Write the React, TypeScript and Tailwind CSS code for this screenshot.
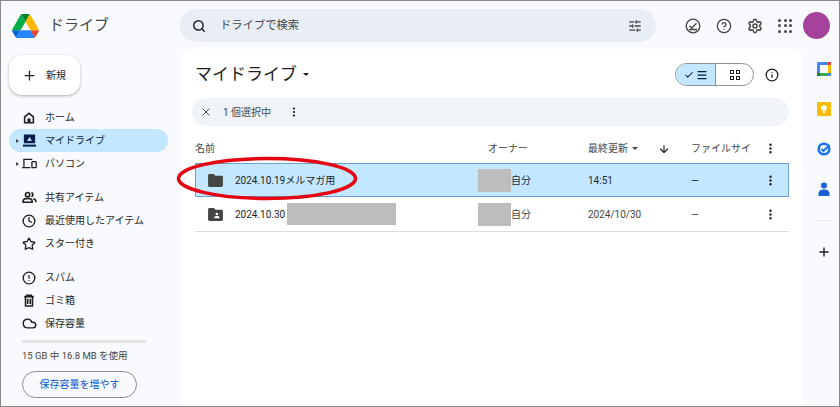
import { Search, SlidersHorizontal, CircleHelp, Settings, Plus, Info, X, EllipsisVertical, ArrowDown, Check, Menu, Star, Clock, Cloud, CircleAlert } from "lucide-react";
import type { ReactNode } from "react";

const FONT = "font-['Roboto','Noto_Sans_CJK_JP',sans-serif]";

function Caret({ className }: { className: string }) {
  return (
    <svg viewBox="0 0 10 5" className={className} fill="currentColor">
      <path d="M0 0h10L5 5z" />
    </svg>
  );
}

function DriveLogo() {
  return (
    <svg viewBox="0 0 87.3 78" className="h-[24px] w-[27px]">
      <path d="m6.6 66.85 3.85 6.65c.8 1.4 1.95 2.5 3.3 3.3l13.75-23.8h-27.5c0 1.55.4 3.1 1.2 4.5z" fill="#0066da" />
      <path d="m43.65 25-13.75-23.8c-1.35.8-2.5 1.9-3.3 3.3l-25.4 44a9.06 9.06 0 0 0-1.2 4.5h27.5z" fill="#00ac47" />
      <path d="m73.55 76.8c1.35-.8 2.5-1.9 3.3-3.3l1.6-2.75 7.65-13.25c.8-1.4 1.2-2.95 1.2-4.5h-27.502l5.852 11.5z" fill="#ea4335" />
      <path d="m43.65 25 13.75-23.8c-1.35-.8-2.9-1.2-4.5-1.2h-18.5c-1.6 0-3.15.45-4.5 1.2z" fill="#00832d" />
      <path d="m59.8 53h-32.3l-13.75 23.8c1.35.8 2.9 1.2 4.5 1.2h50.8c1.6 0 3.15-.45 4.5-1.2z" fill="#2684fc" />
      <path d="m73.4 26.5-12.7-22c-.8-1.4-1.95-2.5-3.3-3.3l-13.75 23.8 16.15 28h27.45c0-1.55-.4-3.1-1.2-4.5z" fill="#ffba00" />
    </svg>
  );
}

function HomeIcon() {
  return (
    <svg viewBox="0 0 16 16" className="h-[14px] w-[14px] text-[#1f1f1f]" fill="none" stroke="currentColor" strokeWidth="1.8">
      <path d="M3 6.8 8 2.6l5 4.2v6.6H3z" />
      <rect x="6.2" y="8.6" width="3.6" height="4.8" fill="currentColor" stroke="none" />
    </svg>
  );
}

function MyDriveIcon() {
  return (
    <svg viewBox="0 0 16 16" className="h-[15px] w-[15px] text-[#041e49]" fill="currentColor">
      <path d="M2 1.500h12v9.500H2zm6 2.700L5.400 8.600h5.200z" fillRule="evenodd" />
      <path d="M1 12.400h14v2.100H1z" />
    </svg>
  );
}

function ComputerIcon() {
  return (
    <svg viewBox="0 0 16 14" className="h-[13px] w-[15px] text-[#1f1f1f]" fill="none" stroke="currentColor" strokeWidth="1.4">
      <path d="M2 10.500V2.500h9M0 11.500h9" />
      <rect x="10.600" y="5" width="4.600" height="6.500" rx=".6" />
    </svg>
  );
}

function SharedIcon() {
  return (
    <svg viewBox="0 0 16 16" className="h-[15px] w-[15px] text-[#1f1f1f]" fill="none" stroke="currentColor" strokeWidth="1.7">
      <circle cx="6" cy="5" r="2.300" />
      <path d="M1.200 13v-1.200c0-1.700 2.400-2.800 4.800-2.800s4.800 1.100 4.800 2.800V13z" />
      <path d="M10 2.800a2.300 2.300 0 0 1 0 4.400M12 9.300c1.600.4 2.800 1.300 2.800 2.500V13" />
    </svg>
  );
}

function TrashIcon() {
  return (
    <svg viewBox="0 0 16 16" className="h-[14px] w-[14px] text-[#1f1f1f]" fill="none" stroke="currentColor" strokeWidth="1.800">
      <path d="M2.500 3h11M4 3v10.800h8V3" />
      <path d="M6.500 5.500v6M9.500 5.500v6" />
      <path d="M5.500 3V1.500h5V3" />
    </svg>
  );
}

function FolderIcon({ shared }: { shared?: boolean }) {
  return (
    <svg viewBox="0 0 16 14" className="h-[13px] w-[15px] text-[#444746]" fill="currentColor">
      <path d="M1.500 0h4.700l1.600 1.800h6.700c.8 0 1.500.7 1.500 1.500v9.200c0 .8-.7 1.500-1.500 1.500h-13C.7 14 0 13.300 0 12.500v-11C0 .7.700 0 1.500 0z" />
      {shared && <path d="M9.500 5a1.400 1.400 0 1 1 0 2.800 1.400 1.400 0 0 1 0-2.800zM6.700 11v-.8c0-1 1.800-1.500 2.800-1.500s2.800.5 2.800 1.500v.8z" fill="#fff" />}
    </svg>
  );
}

function NavItem({ icon, label, active, arrow }: { icon: ReactNode; label: string; active?: boolean; arrow?: boolean }) {
  return (
    <div className={`relative flex h-[23px] items-center rounded-full pl-[12px] ${active ? "bg-[#c2e7ff] text-[#041e49]" : "text-[#1f1f1f]"}`}>
      {arrow && <span className="absolute left-[7px] h-0 w-0 border-y-[2px] border-l-[3px] border-y-transparent border-l-[#444746]" />}
      <span className="flex w-[24px] shrink-0 justify-center pr-[8px]">{icon}</span>
      <span className="text-[10px]">{label}</span>
    </div>
  );
}

function Redacted({ className }: { className: string }) {
  return <div className={`bg-[#bdbdbd] ${className}`} />;
}

const COLS = "grid grid-cols-[293px_100px_103px_73px_25px]";

function FileRow({ name, redactName, date, shared, selected }: { name: string; redactName?: boolean; date: string; shared?: boolean; selected?: boolean }) {
  return (
    <div className={`${COLS} items-center text-[10px] ${selected ? "h-[34px] outline outline-[#6d9ed6] -outline-offset-1 bg-[#c2e7ff] text-[#1f2a44]" : "h-[35px] border-b border-[#dadce0] text-[#444746]"}`}>
      <div className="flex items-center pl-[13px]">
        <FolderIcon shared={shared} />
        <span className="ml-[12px] whitespace-nowrap text-[#1f1f1f]">{name}</span>
        {redactName && <Redacted className="ml-[2px] h-[22px] w-[109px]" />}
      </div>
      <div className="-ml-[10px] flex items-center">
        <Redacted className="h-[23px] w-[33px]" />
        <span>自分</span>
      </div>
      <span>{date}</span>
      <span>—</span>
      <EllipsisVertical className="h-[13px] w-[13px] text-[#1f1f1f]" strokeWidth={2.500} />
    </div>
  );
}

export default function App() {
  return (
    <div className={`${FONT} relative h-[407px] w-[840px] overflow-hidden border border-[#8a8a8a] bg-[#f8fafd]`}>
      {/* top bar */}
      <header className="flex h-[48px] items-center pt-[1px]">
        <div className="flex w-[179px] items-center pl-[11px]">
          <DriveLogo />
          <span className="ml-[10px] text-[15px] leading-none text-[#444746]">ドライブ</span>
        </div>
        <div className="flex h-[33px] w-[476px] items-center rounded-full bg-[#e9eef6] pl-[12px] pr-[14px]">
          <Search className="h-[14px] w-[14px] text-[#1f1f1f]" strokeWidth={2.500} />
          <span className="ml-[14px] pt-[1px] text-[11.300px] text-[#444746]">ドライブで検索</span>
          <SlidersHorizontal className="ml-auto h-[14px] w-[14px] text-[#444746]" strokeWidth={2.200} />
        </div>
        <div className="ml-[29px] flex items-center gap-[15px] text-[#444746]">
          <svg viewBox="0 0 16 16" className="h-[16px] w-[16px]" fill="none" stroke="currentColor" strokeWidth="1.300">
            <circle cx="8" cy="8" r="6.800" />
            <path d="m4.500 7.800 2.200 2.200 4.800-4.800M4 11.500h8" />
          </svg>
          <CircleHelp className="h-[16px] w-[16px]" strokeWidth={1.900} />
          <Settings className="h-[16px] w-[16px]" strokeWidth={2.300} />
          <div className="grid grid-cols-3 gap-[2.500px]">
            {Array.from({ length: 9 }).map((_, i) => (
              <span key={i} className="h-[3px] w-[3px] rounded-full bg-[#444746]" />
            ))}
          </div>
        </div>
        <div className="ml-[11px] h-[27px] w-[27px] rounded-full bg-[#a5429c]" />
      </header>

      <div className="flex h-[357px]">
        {/* left nav */}
        <aside className="w-[180px] shrink-0 pl-[8px] pr-[13px] pt-[6px]">
          <button className="flex h-[40px] w-[71px] items-center rounded-[13px] bg-white pl-[13px] shadow-[0_1px_3px_rgba(60,64,67,.4)]">
            <Plus className="h-[15px] w-[15px] text-[#1f1f1f]" />
            <span className="ml-[9px] text-[10px] text-[#1f1f1f]">新規</span>
          </button>
          <nav className="mt-[11px]">
            <NavItem icon={<HomeIcon />} label="ホーム" />
            <NavItem icon={<MyDriveIcon />} label="マイドライブ" active arrow />
            <NavItem icon={<ComputerIcon />} label="パソコン" arrow />
            <div className="h-[11px]" />
            <NavItem icon={<SharedIcon />} label="共有アイテム" />
            <NavItem icon={<Clock className="h-[14px] w-[14px]" strokeWidth={2.300} />} label="最近使用したアイテム" />
            <NavItem icon={<Star className="h-[14px] w-[14px]" strokeWidth={2.300} />} label="スター付き" />
            <div className="h-[11px]" />
            <NavItem icon={<CircleAlert className="h-[14px] w-[14px]" strokeWidth={2.300} />} label="スパム" />
            <NavItem icon={<TrashIcon />} label="ゴミ箱" />
            <NavItem icon={<Cloud className="h-[15px] w-[15px]" strokeWidth={2.200} />} label="保存容量" />
          </nav>
          <div className="ml-[13px] mt-[5px] h-[3px] w-[124px] bg-[#e3e3e3]" />
          <p className="ml-[13px] mt-[6px] text-[9.500px] leading-[14px] text-[#444746]">15 GB 中 16.8 MB を使用</p>
          <button className="ml-[13px] mt-[8px] h-[27px] w-[115px] rounded-full border border-[#8a8d90] text-[10px] text-[#0b57d0]">保存容量を増やす</button>
        </aside>

        {/* main panel */}
        <main className="w-[621px] shrink-0 rounded-t-[12px] bg-white pl-[11px] pr-[13px]">
          <div className="flex h-[49px] items-center pt-[2px]">
            <h1 className="pl-[3px] text-[17px] leading-none text-[#1f1f1f]">マイドライブ</h1>
            <Caret className="ml-[6px] h-[3px] w-[6px] text-[#1f1f1f]" />
            <div className="ml-auto flex h-[23px] w-[79px] overflow-hidden rounded-full border border-[#8f9295]">
              <div className="flex w-[39px] items-center justify-center gap-[2px] bg-[#c2e7ff] text-[#041e49]">
                <Check className="h-[10px] w-[10px]" strokeWidth={2.500} />
                <Menu className="h-[12px] w-[12px]" strokeWidth={2.500} />
              </div>
              <div className="flex flex-1 items-center justify-center border-l border-[#8f9295]">
                <div className="grid grid-cols-2 gap-[2px]">
                  {Array.from({ length: 4 }).map((_, i) => (
                    <span key={i} className="h-[4px] w-[4px] border border-[#1f1f1f]" />
                  ))}
                </div>
              </div>
            </div>
            <Info className="ml-[11px] mr-[10px] h-[14px] w-[14px] text-[#1f1f1f]" strokeWidth={2.200} />
          </div>
          <div className="flex h-[28px] items-center rounded-full bg-[#f0f4f9] pl-[8px]">
            <X className="h-[12px] w-[12px] text-[#444746]" />
            <span className="ml-[11px] text-[10px] text-[#444746]">1 個選択中</span>
            <EllipsisVertical className="ml-[17px] h-[12px] w-[12px] text-[#1f1f1f]" strokeWidth={2.500} />
          </div>
          <div className="ml-[3px]">
            <div className={`${COLS} mt-[8px] h-[29px] items-center text-[10px] text-[#444746]`}>
              <span>名前</span>
              <span>オーナー</span>
              <div className="flex items-center justify-between pr-[21px]">
                <div className="flex items-center gap-[4px]">
                  <span>最終更新</span>
                  <Caret className="h-[3px] w-[6px]" />
                </div>
                <ArrowDown className="h-[12px] w-[12px] text-[#1f1f1f]" strokeWidth={2.200} />
              </div>
              <span className="whitespace-nowrap">ファイルサイ</span>
              <EllipsisVertical className="h-[13px] w-[13px] text-[#1f1f1f]" strokeWidth={2.500} />
            </div>
            <FileRow name="2024.10.19メルマガ用" date="14:51" selected />
            <FileRow name="2024.10.30" date="2024/10/30" shared redactName />
          </div>
        </main>

        {/* right rail */}
        <aside className="flex flex-1 flex-col items-center pl-[6px] pt-[13px]">
          <svg viewBox="0 0 14 14" className="h-[14px] w-[14px]">
            <rect width="14" height="14" rx="1" fill="#4285f4" />
            <rect x="3" y="3" width="8" height="8" fill="#fff" />
            <path d="M11 0h3v3h-3z" fill="#ea4335" />
            <path d="M3 11h8v3H3z" fill="#34a853" />
            <path d="M11 3h3v8h-3z" fill="#fbbc04" />
            <path d="M0 11h3v3H1a1 1 0 0 1-1-1z" fill="#188038" />
          </svg>
          <svg viewBox="0 0 14 14" className="mt-[26px] h-[14px] w-[14px]">
            <rect width="14" height="14" rx="1" fill="#fbbc04" />
            <circle cx="7" cy="6" r="2.800" fill="#fff" />
            <rect x="5.700" y="9.200" width="2.600" height="1.600" fill="#fff" />
          </svg>
          <svg viewBox="0 0 14 14" className="mt-[26px] h-[14px] w-[14px]" fill="none">
            <circle cx="7" cy="7" r="5.300" stroke="#1a73e8" strokeWidth="2.600" />
            <path d="m4.500 7 2 2 6-6" stroke="#1a73e8" strokeWidth="2" />
          </svg>
          <svg viewBox="0 0 14 14" className="mt-[26px] h-[14px] w-[14px]" fill="#1a5fd0">
            <circle cx="7" cy="3.500" r="3" />
            <path d="M1.500 14v-2.500C1.500 9 4 7.500 7 7.500s5.500 1.500 5.500 4V14z" />
          </svg>
          <div className="mt-[24px] h-px w-[16px] bg-[#e8eaed]" />
          <Plus className="mt-[24px] h-[14px] w-[14px] text-[#1f1f1f]" strokeWidth={2.400} />
        </aside>
      </div>

      {/* red annotation circle drawn over the selected row */}
      <svg viewBox="0 0 190 46" className="absolute left-[175px] top-[155px] h-[46px] w-[190px]" fill="none">
        <ellipse cx="91" cy="22.500" rx="88.500" ry="20" stroke="#e60012" strokeWidth="3.500" />
      </svg>
    </div>
  );
}
